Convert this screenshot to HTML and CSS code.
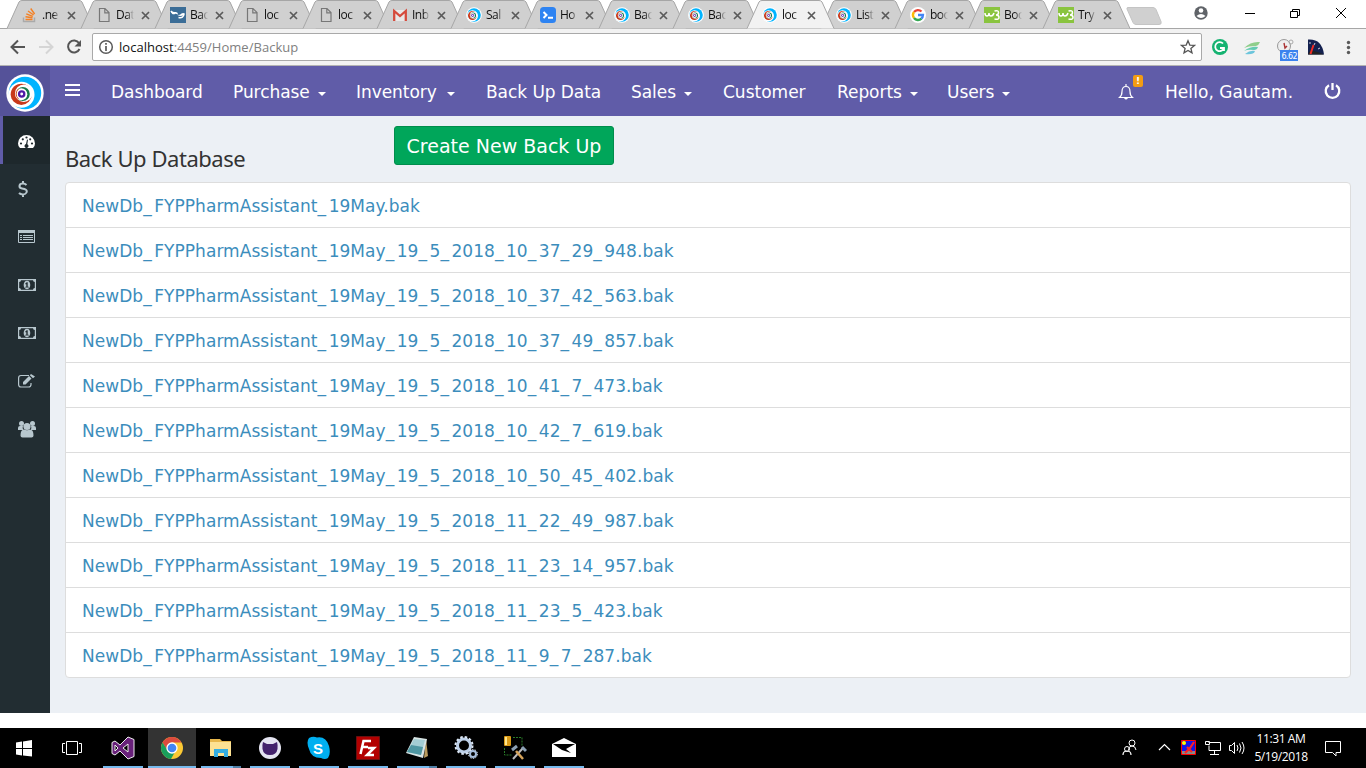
FILE: index.html
```html
<!DOCTYPE html>
<html lang="en">
<head>
<meta charset="utf-8">
<title>Back Up Database</title>
<link rel="stylesheet" href="styles.css">
</head>
<body>
<svg class="defs" aria-hidden="true">
  <symbol id="tab" viewBox="0 0 90 29"><path d="M1 28.5 13 2Q14 .5 16 .5H73Q75 .5 76 2L88 28.5" stroke="#a6a6a6"/></symbol>
  <symbol id="x" viewBox="0 0 9 9"><path d="M1 1l7 7M8 1l-7 7" stroke="#5a5a5a" stroke-width="1.7"/></symbol>
  <symbol id="so" viewBox="0 0 16 16"><path d="M1.500 10.500v4h11v-4" fill="none" stroke="#aaa" stroke-width="1.500"/><path d="M3.500 12.500h7M3.500 9.800l7 1M4.300 6.800l6.500 2.600M6 4l5.600 4M8.700 1.500l3.900 5.500" stroke="#f48024" stroke-width="1.400"/></symbol>
  <symbol id="file" viewBox="0 0 16 16"><path d="M3.500 1.500h5.500l4 4v9H3.500zM8.800 1.500v4.300H13" fill="none" stroke="#777" stroke-width="1.200"/></symbol>
  <symbol id="bird" viewBox="0 0 16 16"><path fill="#3b6d97" d="M0 0h16v16H0z"/><path d="M1 4q1 2.500 4 2.500M8.500 10.500q5 1 5.500-3.500" fill="none" stroke="#fff" stroke-width="1.500"/><path d="M1 3.500q2 2 5 1.500 2 .3 2 2.500Q5 6 3 7.500 1 6 1 3.500zM7.500 8q3 0 4-1.500Q13 5.500 15 6.500l-2 2q-3 1-5.500-.5z" fill="#fff"/></symbol>
  <symbol id="gm" viewBox="0 0 16 16"><path fill="#e8e8e8" d="M1 3h14v11H1z"/><path d="M2.200 14V4L8 9l5.800-5v10" fill="none" stroke="#d54b3d" stroke-width="2.300"/></symbol>
  <symbol id="swirl" viewBox="0 0 38 38"><circle cx="19" cy="19" r="18.700" fill="#fff"/><circle cx="19" cy="19" r="16.200" fill="#00b4ff"/><circle cx="15.500" cy="20.800" r="13" fill="#fff"/><circle cx="15.300" cy="20.300" r="10.600" fill="#c8391b"/><circle cx="17.800" cy="19.200" r="8.700" fill="#fff"/><circle cx="16.800" cy="20" r="7" fill="#16784a"/><circle cx="15.300" cy="20.200" r="6" fill="#fff"/><path d="M12.500 15a6.500 6.500 0 0 0 0 10" fill="none" stroke="#d4532c"/><circle cx="15.700" cy="20" r="2.600" fill="#fff" stroke="#5019a5" stroke-width="2.300"/></symbol>
  <symbol id="ps" viewBox="0 0 16 16"><rect width="16" height="16" rx="3.500" fill="#2d83f2"/><path d="M3.500 5l3 3-3 3M8 10.800h5" fill="none" stroke="#fff" stroke-width="2"/></symbol>
  <symbol id="goo" viewBox="0 0 16 16"><circle cx="8" cy="8" r="8" fill="#fff"/><g fill="none" stroke-width="2.300"><path d="M4 5A5 5 0 0 1 11.500 4.500" stroke="#ea4335"/><path d="M4 5a5 5 0 0 0 0 6" stroke="#fbbc05"/><path d="M4 11a5 5 0 0 0 7.500.6" stroke="#34a853"/><path d="M11.300 11.700A5 5 0 0 0 13 8H8" stroke="#4285f4"/></g></symbol>
  <symbol id="w3" viewBox="0 0 16 16"><path fill="#8ac43f" d="M0 0h16v16H0z"/><path d="M1 6q0 3 2 3t2-3q0 3 2 3t3-3M10.500 4q4-1 4 1.500T12 8q3 0 3 2.500T10.500 12" fill="none" stroke="#fff" stroke-width="1.500"/></symbol>
  <symbol id="money" viewBox="0 0 18 12"><path fill-rule="evenodd" d="M0 0h18v12H0zM3 1.200Q3 3 1.200 3v6Q3 9 3 10.800h12Q15 9 16.800 9V3Q15 3 15 1.200z"/><path fill-rule="evenodd" d="M9 1.800c4.400 0 4.400 8.400 0 8.400S4.600 1.800 9 1.800zM8.700 3.300L7.300 4.400v.8h1v2.500H7.200v.8h3.600v-.8H9.700V3.300z"/></symbol>
</svg>

<header class="tabs">
  <div class="tab"><svg class="shape"><use href="#tab"/></svg><svg class="fav"><use href="#so"/></svg><span>.ne</span><svg class="x"><use href="#x"/></svg></div>
  <div class="tab"><svg class="shape"><use href="#tab"/></svg><svg class="fav"><use href="#file"/></svg><span>Dat</span><svg class="x"><use href="#x"/></svg></div>
  <div class="tab"><svg class="shape"><use href="#tab"/></svg><svg class="fav"><use href="#bird"/></svg><span>Bac</span><svg class="x"><use href="#x"/></svg></div>
  <div class="tab"><svg class="shape"><use href="#tab"/></svg><svg class="fav"><use href="#file"/></svg><span>loc</span><svg class="x"><use href="#x"/></svg></div>
  <div class="tab"><svg class="shape"><use href="#tab"/></svg><svg class="fav"><use href="#file"/></svg><span>loc</span><svg class="x"><use href="#x"/></svg></div>
  <div class="tab"><svg class="shape"><use href="#tab"/></svg><svg class="fav"><use href="#gm"/></svg><span>Inb</span><svg class="x"><use href="#x"/></svg></div>
  <div class="tab"><svg class="shape"><use href="#tab"/></svg><svg class="fav"><use href="#swirl"/></svg><span>Sal</span><svg class="x"><use href="#x"/></svg></div>
  <div class="tab"><svg class="shape"><use href="#tab"/></svg><svg class="fav"><use href="#ps"/></svg><span>Ho</span><svg class="x"><use href="#x"/></svg></div>
  <div class="tab"><svg class="shape"><use href="#tab"/></svg><svg class="fav"><use href="#swirl"/></svg><span>Bac</span><svg class="x"><use href="#x"/></svg></div>
  <div class="tab"><svg class="shape"><use href="#tab"/></svg><svg class="fav"><use href="#swirl"/></svg><span>Bac</span><svg class="x"><use href="#x"/></svg></div>
  <div class="tab active"><svg class="shape"><use href="#tab"/></svg><svg class="fav"><use href="#swirl"/></svg><span>loc</span><svg class="x"><use href="#x"/></svg></div>
  <div class="tab"><svg class="shape"><use href="#tab"/></svg><svg class="fav"><use href="#swirl"/></svg><span>List</span><svg class="x"><use href="#x"/></svg></div>
  <div class="tab"><svg class="shape"><use href="#tab"/></svg><svg class="fav"><use href="#goo"/></svg><span>boo</span><svg class="x"><use href="#x"/></svg></div>
  <div class="tab"><svg class="shape"><use href="#tab"/></svg><svg class="fav"><use href="#w3"/></svg><span>Boo</span><svg class="x"><use href="#x"/></svg></div>
  <div class="tab"><svg class="shape"><use href="#tab"/></svg><svg class="fav"><use href="#w3"/></svg><span>Try</span><svg class="x"><use href="#x"/></svg></div>
  <svg class="window-controls" width="250" height="28" viewBox="0 0 250 28" fill="none">
    <path d="M12 7.500h25q2 0 3 2l5 12q1 3-2 3H20q-2 0-3-2L11 9q-.500-1.500 1-1.500z" fill="#d0d0d0" stroke="#c4c4c4"/>
    <circle cx="85" cy="13" r="6.700" fill="#5f6368"/><circle cx="85" cy="10.500" r="2.300" fill="#fff"/><path d="M80.500 16q4.500-4 9 0-4.500 4-9 0z" fill="#fff"/>
    <g stroke="#000"><path d="M129 13.500h10M174.500 11.500h7v6h-7zM176.500 11v-1.500h7v6h-2M220 8l10 10M230 8l-10 10"/></g>
  </svg>
</header>

<div class="toolbar">
  <svg width="92" height="37" viewBox="0 0 92 37" fill="none" stroke-width="2"><path d="M25 18H12M18 11.500L11.500 18l6.500 6.500" stroke="#555"/><path d="M39 18h13M46 11.500l6.500 6.500-6.500 6.500" stroke="#d5d5d5"/><path d="M79 14a6 6 0 1 0 .5 6" stroke="#555"/><path d="M81 11v6.500h-6.500z" fill="#555"/></svg>
  <div class="address">
    <svg width="16" height="16" viewBox="0 0 16 16" fill="none" stroke="#5a5a5a"><circle cx="8" cy="8" r="6.300" stroke-width="1.500"/><path d="M8 7v5M8 4v1.700" stroke-width="1.700"/></svg>
    <p><b>localhost</b>:4459/Home/Backup</p>
    <svg class="star" width="16" height="16" viewBox="0 0 16 16"><path d="M8 1.800l1.800 4.300 4.600.3-3.500 3 1.100 4.500-4-2.400-4 2.400 1.100-4.500-3.500-3 4.600-.3z" fill="none" stroke="#555" stroke-width="1.300"/></svg>
  </div>
  <svg width="164" height="37" viewBox="1 0 164 37" fill="none">
    <circle cx="19" cy="18" r="8" fill="#15b371"/><path d="M22 14.500a4.500 4.500 0 1 0 .8 5M19 19h4v3" stroke="#fff" stroke-width="1.800"/>
    <path d="M43 19q7-7 16-6-1 3-4 4-8 0-12 2z" fill="#8fce8b"/><path d="M43 22q7-5 14-4-1 3-4 3-6-1-10 1z" fill="#63cbb2"/><path d="M44 25q5-4 10-3-1 4-10 3z" fill="#6cc5dc"/>
    <circle cx="83" cy="17" r="6.500" fill="#eee" stroke="#999"/><circle cx="90" cy="13" r="2" stroke="#aaa"/><path d="M83 14l1 5 2-2" stroke="#a33" stroke-width="1.400"/>
    <rect x="79" y="21" width="18" height="11" fill="#3b82ee"/><text x="80.500" y="30" fill="#fff" class="badge-text">6.62</text>
    <path d="M107 10.500q14-1 16 15H107z" fill="#14214f"/><path d="M107 25.500q1-4 4-4 5 1 12 4z" fill="#222"/><path d="M109.500 25l3-9" stroke="#f02b25" stroke-width="2"/><path d="M109 13v2M114 14l-1 2M119 19l-2 1" stroke="#ccd"/>
    <g fill="#5a5a5a"><circle cx="147.500" cy="13.500" r="1.700"/><circle cx="147.500" cy="18.500" r="1.700"/><circle cx="147.500" cy="23.500" r="1.700"/></g>
  </svg>
</div>

<div class="app">
  <nav class="navbar">
    <div class="logo"><svg width="38" height="38"><use href="#swirl"/></svg></div>
    <svg class="burger" width="15" height="12"><path d="M0 1h15M0 6h15M0 11h15" stroke="#fff" stroke-width="2"/></svg>
    <ul>
      <li>Dashboard</li><li>Purchase<i class="caret"></i></li><li>Inventory<i class="caret"></i></li><li>Back Up Data</li><li>Sales<i class="caret"></i></li><li>Customer</li><li>Reports<i class="caret"></i></li><li>Users<i class="caret"></i></li>
    </ul>
    <div class="bell"><svg width="16" height="18" viewBox="0 0 16 18"><path d="M8 1v2M1.500 14.500q2.500-2 2.500-6Q4 3.500 8 3.500t4 5q0 4 2.500 6z" fill="none" stroke="#fff" stroke-width="1.200"/><path d="M6 15h4q-2 3-4 0z" fill="#fff"/></svg><b>!</b></div>
    <span class="hello">Hello, Gautam.</span>
    <svg class="power" width="17" height="18" viewBox="0 0 17 18" fill="none" stroke="#fff" stroke-width="2.300"><path d="M5 3.200a6.800 6.800 0 1 0 7 0M8.500 1v7"/></svg>
  </nav>
  <div class="main">
    <aside>
      <a class="on"><svg width="18" height="16" viewBox="0 0 18 16"><path d="M2 14Q0 12 0 9.500A8.500 8.500 0 0 1 17 9.500Q17 12 15 14z" fill="#fff"/><g fill="#1e282c"><circle cx="3" cy="9.500" r="1.100"/><circle cx="4.800" cy="5.300" r="1.100"/><circle cx="8.500" cy="3.500" r="1.100"/><circle cx="12.200" cy="5.300" r="1.100"/><circle cx="14" cy="9.500" r="1.100"/><path d="M9 5.500l1 .3-.7 4.400a2 2 0 1 1-1.300-.1z"/></g></svg></a>
      <a><svg width="10" height="18" viewBox="0 0 10 18" fill="none" stroke="#b8c7ce" stroke-width="2"><path d="M8.500 5Q7 3.500 5 3.500C.5 3.500.5 8 4 8.500S9.500 10 8.500 12.500C7.500 15 3 15 1 13M5 1v3M5 14v3"/></svg></a>
      <a><svg width="17" height="14" viewBox="0 0 17 14"><path fill="none" stroke="#b8c7ce" d="M.5.5h16v12H.5z"/><path stroke="#b8c7ce" d="M2 5.500h2M5 5.500h10M2 7.500h2M5 7.500h10M2 9.500h2M5 9.500h10"/><path d="M0 0h17v3H0z"/></svg></a>
      <a><svg width="18" height="12"><use href="#money"/></svg></a>
      <a><svg width="18" height="12"><use href="#money"/></svg></a>
      <a><svg width="17" height="14" viewBox="0 0 17 14"><path d="M11 1.500H3Q.600 1.500.600 4v6.500Q.600 13 3 13h7.500q2.500 0 2.500-2.500V9" fill="none" stroke="#b8c7ce" stroke-width="1.200"/><path d="M5 10.500V8l6-6 2.500 2.500-6 6zM11.800 1.200L13 0l4 2.500-2 1.800z"/></svg></a>
      <a><svg width="18" height="17" viewBox="0 1 18 17"><circle cx="3.500" cy="3.500" r="2.500"/><circle cx="14.500" cy="3.500" r="2.500"/><circle cx="9" cy="6.500" r="3.600"/><path d="M0 10V8q0-2 2-2h3q-1 3 1 4zM18 10V8q0-2-2-2h-3q1 3-1 4zM2.500 15.500q0-6 3.500-6 3 1.500 6 0 3.500 0 3.500 6 0 2-2 2h-9q-2 0-2-2z"/></svg></a>
    </aside>
    <main>
      <div class="heading"><h1>Back Up Database</h1><button>Create New Back Up</button></div>
      <ul class="files">
        <li>NewDb<i>_</i>FYPPharmAssistant<i>_</i>19May.bak</li>
        <li>NewDb<i>_</i>FYPPharmAssistant<i>_</i>19May<i>_</i>19<i>_</i>5<i>_</i>2018<i>_</i>10<i>_</i>37<i>_</i>29<i>_</i>948.bak</li>
        <li>NewDb<i>_</i>FYPPharmAssistant<i>_</i>19May<i>_</i>19<i>_</i>5<i>_</i>2018<i>_</i>10<i>_</i>37<i>_</i>42<i>_</i>563.bak</li>
        <li>NewDb<i>_</i>FYPPharmAssistant<i>_</i>19May<i>_</i>19<i>_</i>5<i>_</i>2018<i>_</i>10<i>_</i>37<i>_</i>49<i>_</i>857.bak</li>
        <li>NewDb<i>_</i>FYPPharmAssistant<i>_</i>19May<i>_</i>19<i>_</i>5<i>_</i>2018<i>_</i>10<i>_</i>41<i>_</i>7<i>_</i>473.bak</li>
        <li>NewDb<i>_</i>FYPPharmAssistant<i>_</i>19May<i>_</i>19<i>_</i>5<i>_</i>2018<i>_</i>10<i>_</i>42<i>_</i>7<i>_</i>619.bak</li>
        <li>NewDb<i>_</i>FYPPharmAssistant<i>_</i>19May<i>_</i>19<i>_</i>5<i>_</i>2018<i>_</i>10<i>_</i>50<i>_</i>45<i>_</i>402.bak</li>
        <li>NewDb<i>_</i>FYPPharmAssistant<i>_</i>19May<i>_</i>19<i>_</i>5<i>_</i>2018<i>_</i>11<i>_</i>22<i>_</i>49<i>_</i>987.bak</li>
        <li>NewDb<i>_</i>FYPPharmAssistant<i>_</i>19May<i>_</i>19<i>_</i>5<i>_</i>2018<i>_</i>11<i>_</i>23<i>_</i>14<i>_</i>957.bak</li>
        <li>NewDb<i>_</i>FYPPharmAssistant<i>_</i>19May<i>_</i>19<i>_</i>5<i>_</i>2018<i>_</i>11<i>_</i>23<i>_</i>5<i>_</i>423.bak</li>
        <li>NewDb<i>_</i>FYPPharmAssistant<i>_</i>19May<i>_</i>19<i>_</i>5<i>_</i>2018<i>_</i>11<i>_</i>9<i>_</i>7<i>_</i>287.bak</li>
      </ul>
    </main>
  </div>
</div>

<footer class="taskbar">
  <div class="task plain"><svg viewBox="0 0 24 24"><path fill="#fff" d="M4 5.500l6-1V11H4zM11 4.400L20 3v8h-9zM4 12h6v6.500l-6-1zM11 12h9v7.500l-9-1z"/></svg></div>
  <div class="task plain"><svg viewBox="0 0 24 24"><path fill="none" stroke="#fff" d="M6.500 4.500h11v13h-11zM5 6.500H2.500v9H5M19 6.500h2.500v9H19"/></svg></div>
  <div class="task"><svg viewBox="0 0 24 24"><path fill="#68217a" fill-rule="evenodd" stroke="#eee" d="M17 1l6 2.500v17L17 23l-8-8-5 4-3-1.500v-11L4 5l5 4zM17 8l-5 4 5 4zM4 9v6l3-3z"/></svg></div>
  <div class="task current"><svg viewBox="0 0 24 24"><circle cx="12" cy="12" r="11" fill="#fbc934"/><path d="M2.500 6.500A11 11 0 0 1 21.500 6.500H12L7 14z" fill="#dc4b3e"/><path d="M2.500 6.500A11 11 0 0 0 11 23l5-9-8 1z" fill="#199f5c"/><circle cx="12" cy="12" r="5" fill="#4285f4" stroke="#fff" stroke-width="1.300"/></svg></div>
  <div class="task split"><svg viewBox="0 0 24 24"><path fill="#e8b84c" d="M1 3h10l2 2h9v4H1z"/><path fill="#fde293" d="M1 6h21v14H1z"/><path fill="#35aee2" d="M5 13h14v8h-4v-4H9v4H5z"/></svg></div>
  <div class="task"><svg viewBox="0 0 24 24"><circle cx="12" cy="12" r="11" fill="#e4e4f1"/><path d="M5 6l4 2h6l4-2q1 3 .5 7-1 6-7.500 6t-7.500-6Q4 9 5 6z" fill="#43226c"/></svg></div>
  <div class="task"><svg viewBox="0 0 24 24"><path d="M2 2Q6 0 10 1.500 19 0 22 10q2 8-1 12-3 2-7 0Q4 22 2 13-1 6 2 2z" fill="#00aff0"/><text x="6" y="18" class="skype">S</text></svg></div>
  <div class="task"><svg viewBox="0 0 24 24"><path fill="#b30000" stroke="#7a2020" stroke-dasharray="1 1" d="M.5.5h23v23H.5z"/><path d="M4.500 18L7.500 5H15M6 11h6M12 12h6l-7 7h7" fill="none" stroke="#fff" stroke-width="2.500"/></svg></div>
  <div class="task split"><svg viewBox="0 0 24 24"><path fill="#b99a5d" d="M21 3l2 17-4 2z"/><path fill="#d8e4e4" d="M9 1l13 2-4 19-17-5z"/><path fill="#a4cdd3" d="M9 3l11 1-4 15-14-3z"/><path fill="#4f97a2" d="M6 9l12 2-2 8-14-3z"/></svg></div>
  <div class="task"><svg viewBox="0 0 24 24" fill="none"><circle cx="10" cy="9.500" r="6.500" stroke="#bdd0e8" stroke-width="3"/><circle cx="10" cy="9.500" r="8.500" stroke="#dce7f5" stroke-width="2" stroke-dasharray="2.500 2"/><circle cx="19" cy="18" r="3" stroke="#a8bfdd" stroke-width="2"/><circle cx="19" cy="18" r="4.500" stroke="#dce7f5" stroke-dasharray="1.500 1.300"/></svg></div>
  <div class="task"><svg viewBox="0 0 24 24" fill="none"><rect x="1" y="0" width="7" height="10" rx="1" fill="#d99a17"/><path d="M3 1v8" stroke="#ffe58a" stroke-width="2"/><path d="M10 1.500h9v8M1.500 12v7h7" stroke="#287a28" stroke-dasharray="2 1"/><path d="M10 23L20 12" stroke="#bbb" stroke-width="2"/><path d="M20 23l-7-8" stroke="#d6a45b" stroke-width="2.500"/><path d="M9 14l5-4M19 11l4 4" stroke="#8ba0b5" stroke-width="3"/></svg></div>
  <div class="task"><svg viewBox="0 0 24 24"><path fill="#fff" d="M0 8l12-6 12 6v13H0z"/><path d="M1 8h22L14 13l5 4-9-3z" fill="#000"/></svg></div>
  <div class="tray">
    <svg width="131" height="40" viewBox="0 0 131 40" fill="none" stroke="#fff"><circle cx="17" cy="15" r="3"/><path d="M13.500 22q0-4 3.500-4t4 4"/><circle cx="12" cy="21" r="2.500"/><path d="M8 27q0-4 4-4t4 4M44 22l5.500-5.500L55 22" stroke-width="1.200"/><path fill="#1414e8" stroke="#f00" d="M66.500 12.500h14v14h-14z"/><circle cx="69" cy="15" r="2" fill="#ff0" stroke="none"/><path d="M67 24.500h13" stroke="#888" stroke-width="3"/><path d="M70 25l5-5 4-6M72 19l5 5" stroke="#f22" stroke-width="2.200"/><path d="M93.500 14.500h12v8H94v-5M99.500 22.500v4M95 26.500h9M90.500 13.500h4v3h-4z"/><path d="M114.500 17.500h2l3-3v11l-3-3h-2zM122 17q2 3 0 6M124.500 15.500q3 4.500 0 9M127 14q4 6 0 12"/></svg>
    <div class="clock"><span>11:31 AM</span><span>5/19/2018</span></div>
    <svg class="note" width="16" height="17" viewBox="0 0 16 17"><path d="M.5 1.500h15v11H11V16l-3.500-3.500h-7z" fill="none" stroke="#fff"/></svg>
  </div>
</footer>
</body>
</html>
```
FILE: styles.css
```css
* { box-sizing: border-box; }
body { margin: 0; width: 1366px; height: 768px; overflow: hidden; background: #fff; font-family: "DejaVu Sans", sans-serif; display: flex; flex-direction: column; }
svg { display: block; flex: none; }
ul { list-style: none; margin: 0; padding: 0; }
.defs { position: absolute; width: 0; height: 0; }

.tabs { height: 28px; flex: none; display: flex; padding-left: 6px; }
.tab { position: relative; width: 74px; flex: none; display: flex; align-items: center; padding: 2px 0 0 16px; font: 12px/16px "Open Sans", sans-serif; color: #111; }
.tab .shape { position: absolute; left: 0; top: 0; width: 90px; height: 29px; z-index: 0; fill: #d0d0d0; }
.tab.active .shape { fill: #f2f2f2; z-index: 2; }
.tab .fav { width: 16px; height: 16px; position: relative; z-index: 3; }
.tab span { width: 18px; margin-left: 4px; overflow: hidden; letter-spacing: -.5px; position: relative; z-index: 3; -webkit-mask-image: linear-gradient(90deg, #000 60%, transparent); mask-image: linear-gradient(90deg, #000 60%, transparent); }
.tab .x { width: 9px; height: 9px; margin-left: 7px; position: relative; z-index: 3; }

.toolbar { height: 38px; flex: none; display: flex; background: #f2f2f2; border-top: 1px solid #a6a6a6; border-bottom: 1px solid #b3b3b3; }
.address { width: 1110px; flex: none; height: 28px; margin-top: 4px; border: 1px solid #a9a9a9; border-radius: 2px; background: #fff; display: flex; align-items: center; padding: 0 5px; }
.address p { margin: 0 0 0 5px; flex: 1; font: 13px/20px "Open Sans", sans-serif; color: #808080; letter-spacing: .03px; }
.address b { font-weight: 400; color: #111; }
.badge-text { font: 8px "DejaVu Sans", sans-serif; letter-spacing: -.6px; }

.app { height: 647px; flex: none; display: flex; flex-direction: column; }
.navbar { height: 50px; flex: none; background: #605ca8; color: #fff; display: flex; font-size: 17px; letter-spacing: -.06px; line-height: 52px; }
.logo { width: 50px; background: #555299; padding: 8px 6px; }
.burger { margin: 18px 31px 0 15px; }
.navbar ul { display: flex; width: 1007px; }
.navbar li { display: flex; align-items: center; white-space: nowrap; width: 122px; height: 52px; }
.navbar li:nth-child(2) { width: 123px; }
.navbar li:nth-child(3) { width: 130px; }
.navbar li:nth-child(4) { width: 145px; }
.navbar li:nth-child(5) { width: 92px; }
.navbar li:nth-child(6) { width: 114px; letter-spacing: 0; }
.navbar li:nth-child(7) { width: 110px; }
.caret { border: 4px solid transparent; border-top-color: #fff; border-bottom: 0; margin: 3px 0 0 8px; }
.navbar li:nth-child(3) .caret { margin-left: 10px; }
.bell { position: relative; width: 47px; padding-top: 17px; }
.bell b { position: absolute; left: 15px; top: 9px; width: 10px; height: 12px; border-radius: 2px; background: #f39c12; font-size: 9px; line-height: 12px; text-align: center; letter-spacing: 0; }
.hello { width: 159px; white-space: nowrap; letter-spacing: .06px; }
.power { margin-top: 16px; }

.main { flex: 1; display: flex; min-height: 0; }
aside { width: 50px; background: #222d32; fill: #b8c7ce; }
aside a { height: 48px; display: flex; align-items: center; padding: 2px 0 0 18px; }
aside a.on { background: #1e282c; border-left: 3px solid #605ca8; padding-left: 15px; padding-top: 4px; }
main { flex: 1; background: #ecf0f5; padding: 10px 15px 0; }
.heading { height: 56px; display: flex; align-items: flex-start; }
h1 { margin: 16px 0 0; width: 329px; font: 400 22px/32px "Noto Sans", sans-serif; letter-spacing: -.45px; color: #333; white-space: nowrap; }
button { width: 220px; height: 39px; padding: 1px 0 0; border: 1px solid #008d4c; border-radius: 3px; background: #00a65a; color: #fff; font: 19px/36px "DejaVu Sans", sans-serif; white-space: nowrap; }
.files { height: 496px; border: 1px solid #ddd; border-radius: 4px; background: #fff; overflow: hidden; }
.files li { height: 45px; border-bottom: 1px solid #ddd; padding-left: 16px; color: #3c8dbc; font-size: 17px; line-height: 47px; letter-spacing: .045px; white-space: nowrap; }
.files li:last-child { border-bottom: 0; }
.files i { font-style: normal; letter-spacing: 2.56px; }

.taskbar { margin-top: auto; height: 40px; flex: none; background: #000; display: flex; }
.task { width: 40px; margin-right: 9px; display: flex; align-items: center; justify-content: center; border-bottom: 2px solid #76b9ed; }
.task svg { width: 24px; height: 24px; margin-top: 2px; }
.task.plain { width: 48px; margin: 0; border: 0; }
.task.plain + .task:not(.plain) { margin-left: 7px; }
.task.current { width: 48px; margin: 0 5px 0 -4px; background: #333; }
.task.split { border-image: linear-gradient(90deg, #76b9ed 78%, #4f7fa6 78%) 2; }
.skype { font: bold 15px "Liberation Sans", sans-serif; fill: #fff; }
.tray { margin-left: auto; display: flex; width: 251px; color: #fff; }
.clock { width: 70px; padding-top: 2px; display: flex; flex-direction: column; align-items: center; font: 12px/18px "Open Sans", sans-serif; letter-spacing: -.4px; }
.note { margin: 12px 0 0 9px; }
```
